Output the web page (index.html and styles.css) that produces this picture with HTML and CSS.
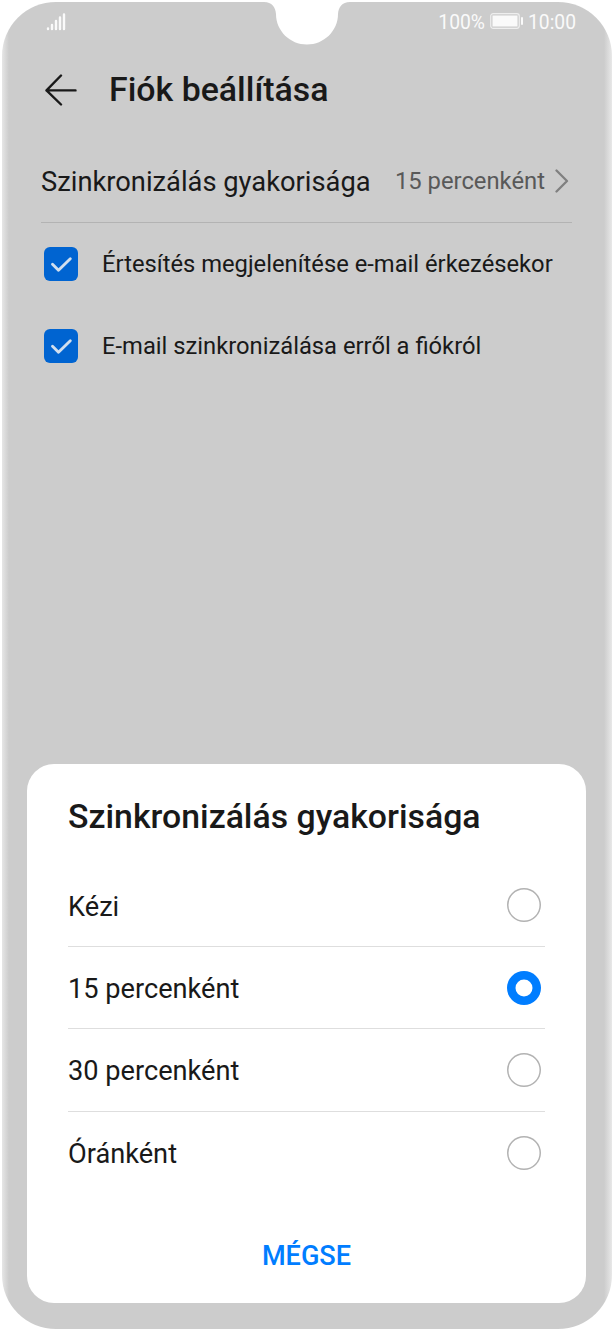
FILE: index.html
```html
<!DOCTYPE html>
<html lang="hu">
<head>
<meta charset="utf-8">
<title>Fiók beállítása</title>
<link rel="stylesheet" href="styles.css">
</head>
<body>
<div class="phone">
  <svg class="notch" width="86" height="44" viewBox="0 0 86 44"><path d="M0 0H86C78 0 74.500 5 74 12C74 29 60 42.500 43 42.500S12 29 12 12C11.500 5 8 0 0 0Z"/></svg>
  <div class="status">
    <svg class="signal" width="20" height="18" viewBox="0 0 20 18"><path d="M2 15.500V16M6 12V16M10 8V16M14 4.500V16M18 1.500V16"/></svg>
    <div class="status-right">
      <span class="charge">100%</span>
      <svg class="battery" width="34" height="16" viewBox="0 0 34 16"><rect class="case" x=".7" y=".7" width="28.600" height="14.600" rx="2.500"/><rect x="2.500" y="2.500" width="25" height="11"/><rect x="31" y="4" width="2" height="8" rx="1"/></svg>
      <span class="clock">10:00</span>
    </div>
  </div>
  <header class="header">
    <svg class="back" width="32" height="32" viewBox="0 0 32 32"><path d="M30.500 16.400H1.500M16 1.500L1.500 16.400L16 30.500"/></svg>
    <h1 class="title">Fiók beállítása</h1>
  </header>
  <div class="setting">
    <span class="setting-name">Szinkronizálás gyakorisága</span>
    <span class="setting-value">15 percenként</span>
    <svg class="chevron" width="14" height="24" viewBox="0 0 14 24"><path d="M1.500 1.500L12 12L1.500 22.500"/></svg>
  </div>
  <div class="check-row">
    <svg class="checkbox" width="34" height="34" viewBox="0 0 34 34"><rect width="34" height="34" rx="6"/><path d="M8.500 17.200L14.500 23.200L26.300 11.800"/></svg>
    <span class="check-label">Értesítés megjelenítése e-mail érkezésekor</span>
  </div>
  <div class="check-row">
    <svg class="checkbox" width="34" height="34" viewBox="0 0 34 34"><rect width="34" height="34" rx="6"/><path d="M8.500 17.200L14.500 23.200L26.300 11.800"/></svg>
    <span class="check-label">E-mail szinkronizálása erről a fiókról</span>
  </div>
  <section class="dialog">
    <h2 class="dialog-title">Szinkronizálás gyakorisága</h2>
    <div class="option"><span>Kézi</span><i class="radio"></i></div>
    <div class="option"><span>15 percenként</span><i class="radio selected"></i></div>
    <div class="option"><span>30 percenként</span><i class="radio"></i></div>
    <div class="option"><span>Óránként</span><i class="radio"></i></div>
    <div class="cancel">MÉGSE</div>
  </section>
</div>
</body>
</html>
```
FILE: styles.css
```css
* { box-sizing: border-box; }
body { margin: 0; height: 1330px; padding: 1.5px 1px 1px 2px; background: #fff; font-family: Roboto, sans-serif; color: #191919; overflow: hidden; }
.phone { position: relative; height: 1327.5px; display: flex; flex-direction: column; border-radius: 54px; background: linear-gradient(90deg, #e6e6e6, #ccc 7px, #ccc calc(100% - 8px), #e8e8e8); white-space: nowrap; }
.phone span, .title, .dialog-title, .cancel { line-height: 1; }
.notch { position: absolute; top: 0; left: 262px; fill: #fff; }
.status { height: 40px; padding: 0 36px 0 43.5px; display: flex; justify-content: space-between; align-items: center; color: #fafafa; }
.signal { stroke: #fafafa; stroke-width: 2.4; stroke-linecap: round; }
.status-right { display: flex; align-items: center; font-size: 19.3px; }
.status-right span { padding-top: 2px; }
.battery { margin: 0 4px 0 5px; fill: #fafafa; }
.battery .case { fill: none; stroke: #eee; stroke-width: 1.2; }
.header { height: 98px; padding: 0 43px 2px; display: flex; align-items: center; }
.back { fill: none; stroke: #191919; stroke-width: 2.4; stroke-linecap: round; stroke-linejoin: round; }
.title { margin: 0 0 0 32px; padding-top: 1px; font-size: 33.9px; font-weight: 500; }
.setting { height: 83px; margin: 0 40px 0 39px; display: flex; align-items: center; border-bottom: 1px solid #b3b3b3; }
.setting-name { padding-top: 5px; font-size: 27.3px; }
.setting-value { margin-left: auto; padding-top: 3px; font-size: 23.8px; color: #595959; }
.chevron { margin: 0 3px 0 10px; fill: none; stroke: #808080; stroke-width: 2.3; stroke-linecap: round; stroke-linejoin: round; }
.check-row { height: 82px; padding-left: 42px; display: flex; align-items: center; }
.checkbox { margin-right: 24px; fill: #0064d1; }
.checkbox path { fill: none; stroke: #d1dfee; stroke-width: 2.9; stroke-linecap: round; stroke-linejoin: round; }
.check-label { padding-top: 3.5px; font-size: 23.75px; }
.dialog { height: 538.5px; margin: auto 26px 26.5px 25px; padding: 0 41px; border-radius: 27px; background: #fff; }
.dialog-title { height: 100.5px; margin: 0; padding-top: 35.5px; font-size: 33.8px; font-weight: 500; }
.option { height: 82.45px; display: flex; align-items: center; justify-content: space-between; border-bottom: 1px solid #dedede; font-size: 27.2px; }
.option span { padding-top: 4px; }
.option:nth-of-type(4) { border-color: transparent; }
.radio { width: 34px; height: 34px; margin-right: 4px; border-radius: 50%; box-shadow: inset 0 0 0 1.5px #b2b2b2; }
.radio.selected { box-shadow: inset 0 0 0 8.5px #007dff; }
.cancel { margin-top: 49px; text-align: center; font-size: 27.1px; font-weight: 500; color: #007dff; }
```
